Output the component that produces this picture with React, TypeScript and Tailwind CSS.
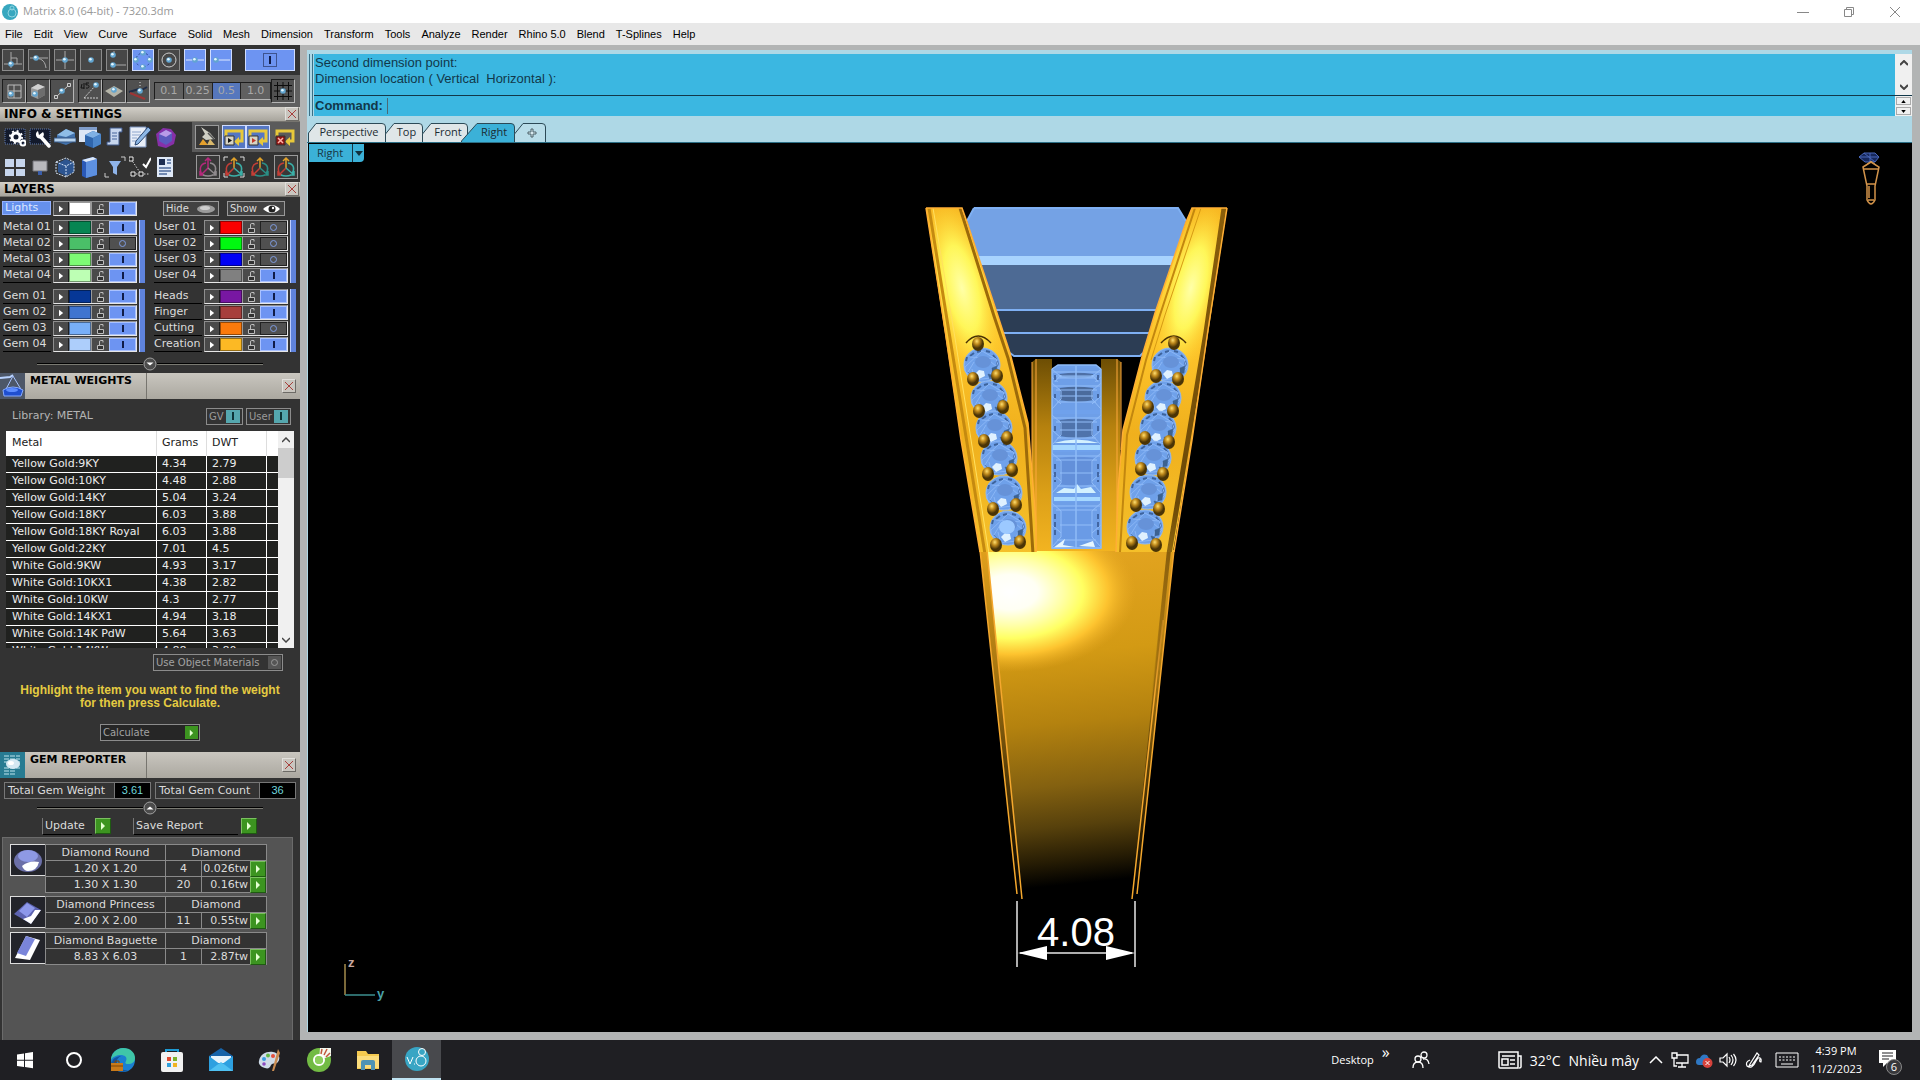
import type { ReactNode } from "react";

const menuItems = [
  "File", "Edit", "View", "Curve", "Surface", "Solid", "Mesh", "Dimension", "Transform",
  "Tools", "Analyze", "Render", "Rhino 5.0", "Blend", "T-Splines", "Help",
];

type Layer = { name: string; color: string; on: boolean };

const layerGroups: { left: Layer[]; right: Layer[] }[] = [
  {
    left: [
      { name: "Metal 01", color: "bg-[#078552]", on: true },
      { name: "Metal 02", color: "bg-[#4abf68]", on: false },
      { name: "Metal 03", color: "bg-[#7dfa74]", on: true },
      { name: "Metal 04", color: "bg-[#bdffb4]", on: true },
    ],
    right: [
      { name: "User 01", color: "bg-[#fa0000]", on: false },
      { name: "User 02", color: "bg-[#00f910]", on: false },
      { name: "User 03", color: "bg-[#0000f4]", on: false },
      { name: "User 04", color: "bg-[#808080]", on: true },
    ],
  },
  {
    left: [
      { name: "Gem 01", color: "bg-[#063796]", on: true },
      { name: "Gem 02", color: "bg-[#3f74cf]", on: true },
      { name: "Gem 03", color: "bg-[#78aff8]", on: true },
      { name: "Gem 04", color: "bg-[#adcefb]", on: true },
    ],
    right: [
      { name: "Heads", color: "bg-[#7817a2]", on: true },
      { name: "Finger", color: "bg-[#a63e3c]", on: true },
      { name: "Cutting", color: "bg-[#fb7a0c]", on: false },
      { name: "Creation", color: "bg-[#fcb924]", on: true },
    ],
  },
];

const metals = [
  ["Yellow Gold:9KY", "4.34", "2.79"],
  ["Yellow Gold:10KY", "4.48", "2.88"],
  ["Yellow Gold:14KY", "5.04", "3.24"],
  ["Yellow Gold:18KY", "6.03", "3.88"],
  ["Yellow Gold:18KY Royal", "6.03", "3.88"],
  ["Yellow Gold:22KY", "7.01", "4.5"],
  ["White Gold:9KW", "4.93", "3.17"],
  ["White Gold:10KX1", "4.38", "2.82"],
  ["White Gold:10KW", "4.3", "2.77"],
  ["White Gold:14KX1", "4.94", "3.18"],
  ["White Gold:14K PdW", "5.64", "3.63"],
  ["White Gold:14KW", "4.88", "3.80"],
];

const gems = [
  { name: "Diamond Round", shape: "round", rows: [["1.20 X 1.20", "4", "0.026tw"], ["1.30 X 1.30", "20", "0.16tw"]] },
  { name: "Diamond Princess", shape: "princess", rows: [["2.00 X 2.00", "11", "0.55tw"]] },
  { name: "Diamond Baguette", shape: "baguette", rows: [["8.83 X 6.03", "1", "2.87tw"]] },
];

/* ---------- small shared pieces ---------- */

function CloseButton({ label }: { label: string }) {
  return (
    <button aria-label={label} className="flex size-[14px] items-center justify-center border border-[#e2e0dc] border-r-[#6d6b66] border-b-[#6d6b66] bg-[#c9c6bf]">
      <svg viewBox="0 0 10 10" className="size-[10px]"><path d="M1 1l8 8M9 1l-8 8" stroke="#a8403c" strokeWidth="1" /></svg>
    </button>
  );
}

function SectionBar({ title }: { title: string }) {
  return (
    <div className="flex h-[15px] items-center justify-between border-b border-[#77756f] bg-linear-to-b from-[#d2cfc8] to-[#a8a59d] pr-px pl-1">
      <h2 className="text-[12px] leading-[14px] font-bold text-black">{title}</h2>
      <CloseButton label={"Close " + title} />
    </div>
  );
}

function PanelBar({ title, icon }: { title: string; icon: ReactNode }) {
  return (
    <div className="flex h-[26px] items-stretch bg-linear-to-b from-[#c9c6bf] to-[#aba8a0]">
      <div className="w-[25px] overflow-hidden">{icon}</div>
      <h2 className="w-[122px] border-r border-[#77756f] pl-[5px] text-[11px] leading-4 font-bold text-black">{title}</h2>
      <div className="flex flex-1 items-center justify-end pr-1"><CloseButton label={"Close " + title} /></div>
    </div>
  );
}

function Splitter({ up }: { up?: boolean }) {
  return (
    <div className="mx-[37px] flex h-[14px] items-center">
      <span className="h-[2px] flex-1 border-t border-black bg-[#7a7a72]" />
      <button aria-label={up ? "Collapse" : "Expand"}>
        <svg viewBox="0 0 14 14" className="size-[14px]">
          <circle cx="7" cy="7" r="6" fill="#4c4c4c" stroke="#a0a0a0" />
          <path d={up ? "M3.5 8.5l3.5-3 3.5 3z" : "M3.5 5.5l3.5 3 3.5-3z"} fill="#fff" />
        </svg>
      </button>
      <span className="h-[2px] flex-1 border-t border-black bg-[#7a7a72]" />
    </div>
  );
}

function GreenArrow({ label }: { label: string }) {
  return (
    <button aria-label={label} className="flex size-4 shrink-0 items-center justify-center border border-[#7bc060] border-r-[#1f5a12] border-b-[#1f5a12] bg-[#3c9420]">
      <svg viewBox="0 0 6 8" className="h-2 w-[6px]"><path d="M1 0l4 4-4 4z" fill="#e4ffd2" /></svg>
    </button>
  );
}

/* ---------- snap toolbar ---------- */

const Ball = ({ x, y }: { x: number; y: number }) => (
  <>
    <circle cx={x} cy={y} r="2.8" fill="#62a5d0" />
    <circle cx={x - 0.6} cy={y - 0.8} r="1.3" fill="#e4f7ff" />
  </>
);

const snapTools: { name: string; on?: boolean; art: ReactNode }[] = [
  { name: "End", art: <><path d="M1 14h18M8 2v16M8 8h6v6" stroke="#aaa" fill="none" /><Ball x={8} y={14} /></> },
  { name: "Near", art: <><path d="M1 8h18M7 8c7 1 9 4 10 10" stroke="#aaa" fill="none" /><Ball x={7} y={8} /></> },
  { name: "Int", art: <><path d="M1 10h18M10 1v18" stroke="#aaa" /><Ball x={10} y={10} /></> },
  { name: "Point", art: <Ball x={10} y={10} /> },
  { name: "Mid", art: <><path d="M8 15h11M7 1v6" stroke="#aaa" /><Ball x={6} y={5} /><Ball x={6} y={15} /></> },
  { name: "Quad", on: true, art: <><circle cx="10" cy="10" r="7" stroke="#2b4a91" fill="none" strokeDasharray="2 2" /><Ball x={10} y={3} /><Ball x={17} y={10} /><Ball x={10} y={17} /><Ball x={3} y={10} /></> },
  { name: "Cen", art: <><circle cx="10" cy="10" r="7" stroke="#ccc" fill="none" /><Ball x={10} y={10} /></> },
  { name: "Midpoint", on: true, art: <><path d="M1 10h18" stroke="#dde8ff" /><Ball x={10} y={10} /></> },
  { name: "Endpoint", on: true, art: <><path d="M5 10h14" stroke="#dde8ff" /><Ball x={5} y={10} /></> },
];

const planeTools: { name: string; art: ReactNode }[] = [
  { name: "Plane", art: <><path d="M4 4h13v13H4zM10 4v13M4 10h13" stroke="#bbb" fill="none" /><Ball x={7} y={13} /></> },
  { name: "Solid", art: <><path d="M3 7l7-4 7 3v8l-7 4-7-3z" fill="#9a9a9a" /><path d="M3 7l7 2 7-3-7-3z" fill="#d0d0d0" /><path d="M10 9v9l7-4V6z" fill="#6d6d6d" /><Ball x={7} y={13} /></> },
  { name: "Line", art: <><path d="M4 16L17 4" stroke="#ccc" /><path d="M2.500 14.500h3v3h-3zM15.500 2.500h3v3h-3z" fill="#555" stroke="#ccc" /><Ball x={10} y={10} /></> },
];

const angleTools: { name: string; art: ReactNode }[] = [
  { name: "Angle 45", art: <><path d="M4 17h14M4 17L16 4" stroke="#ccc" strokeDasharray="2 1" /><path d="M2 3l-1 4h3M4 2v6M9 2H6v2c4-1 4 4 0 3" stroke="#111" fill="none" /><Ball x={16} y={4} /></> },
  { name: "Project", art: <><path d="M1 10l9-5 9 5-9 6z" fill="#b4b4a8" /><Ball x={10} y={9} /></> },
  { name: "Smart Track", art: <><path d="M12 1v10" stroke="#ddd" strokeDasharray="1 2" /><path d="M1 11l10-3M12 10l7-4" stroke="#1f2b45" strokeWidth="2" /><path d="M2 12l15 6" stroke="#9d3535" strokeWidth="2" /><Ball x={12} y={10} /></> },
];

const squareTool = "flex size-[24px] items-center justify-center border border-[#1d1d1d] border-r-[#b5b5b5] border-b-[#b5b5b5] bg-[#505050]";

function SnapToolbars() {
  return (
    <>
      <div className="flex h-[30px] items-center gap-1 pl-[2px]">
        {snapTools.map((tool) => (
          <button
            key={tool.name}
            aria-label={tool.name}
            className={
              tool.on
                ? "flex size-[22px] items-center justify-center border border-[#cfdcff] bg-[#6d94f2]"
                : "flex size-[22px] items-center justify-center border border-[#8b8b8b] bg-[#474747]"
            }
          >
            <svg viewBox="0 0 20 20" className="size-5">{tool.art}</svg>
          </button>
        ))}
        <button aria-label="Snaps on" className="ml-[9px] flex h-[22px] w-[50px] items-center justify-center border border-[#cfdcff] bg-[#6d94f2]">
          <span className="flex size-[14px] items-center justify-center border border-[#3d5390]"><span className="h-2 w-[2px] bg-[#101c48]" /></span>
        </button>
      </div>
      <div className="flex h-[32px] items-center bg-[#606060] pl-[2px]">
        {planeTools.map((tool) => (
          <button key={tool.name} aria-label={tool.name} className={squareTool}><svg viewBox="0 0 20 20" className="size-5">{tool.art}</svg></button>
        ))}
        <span className="w-1" />
        {angleTools.map((tool) => (
          <button key={tool.name} aria-label={tool.name} className={squareTool}><svg viewBox="0 0 20 20" className="size-5">{tool.art}</svg></button>
        ))}
        <div className="ml-1 grid h-[18px] w-[117px] grid-cols-4 border border-[#1d1d1d] border-b-[#b5b5b5] text-[11px] leading-4 text-[#a8a8a8]">
          <button className="border-r border-[#222]">0.1</button>
          <button className="border-r border-[#222]">0.25</button>
          <button className="border-r border-[#222] bg-[#5677bd]">0.5</button>
          <button>1.0</button>
        </div>
        <button aria-label="Grid snap" className={squareTool}>
          <svg viewBox="0 0 20 20" className="size-5"><path d="M1 4.500h18M1 10h18M1 15.500h18M4.500 1v18M10 1v18M15.500 1v18" stroke="#0c0c0c" /><Ball x={10} y={10} /></svg>
        </button>
      </div>
    </>
  );
}

/* ---------- info & settings ---------- */

const infoTop: { name: string; art: ReactNode }[] = [
  { name: "Settings", art: <><path d="M1 3h20v15H1z" fill="#131a2c" stroke="#5f79ad" strokeDasharray="1 1" /><circle cx="12" cy="11" r="4" fill="none" stroke="#fff" strokeWidth="3" /><circle cx="12" cy="11" r="6" fill="none" stroke="#fff" strokeWidth="2" strokeDasharray="2 2.700" /><circle cx="19" cy="17" r="2.500" fill="none" stroke="#fff" strokeWidth="2" /></> },
  { name: "Options", art: <><path d="M1 3h20v15H1z" fill="#131a2c" stroke="#5f79ad" strokeDasharray="1 1" /><path d="M12 11l8 9" stroke="#fff" strokeWidth="3.500" strokeLinecap="round" /><path d="M14 6a4 4 0 1 1-5-1l1 4z" fill="#fff" /></> },
  { name: "Dimensions", art: <><path d="M3 9l9-6 9 4v8l-9 4-9-3z" fill="#4272ac" /><path d="M3 9l9-6 9 4-9 4z" fill="#8fbde6" /><path d="M0 12h22v4H0z" fill="#b7d3ee" stroke="#355784" /></> },
  { name: "Object notes", art: <><path d="M0 1h18v15H0z" fill="#dce6f5" /><path d="M0 1h18v3H0z" fill="#7f9cc8" /><path d="M6 9l8-4 8 3v10l-8 4-8-3z" fill="#2f66ad" /><path d="M6 9l8-4 8 3-8 4z" fill="#7fb1e5" /><path d="M14 12v10l8-4V8z" fill="#4b86cb" /></> },
  { name: "Script", art: <><path d="M6 2h12v4h-3v13H3v-3h3z" fill="#c7d6ee" stroke="#3c5688" /><path d="M8 7h5M8 10h5M8 13h5" stroke="#47649b" /></> },
  { name: "Notes", art: <><path d="M1 1h16v20H1z" fill="#e8eef8" stroke="#7a93be" /><path d="M3 6h9M3 9h9M3 12h5M3 15h5" stroke="#8ea6cd" /><path d="M22 4L9 18l-3 1 1-4L19 1z" fill="#8db7e6" stroke="#29456f" /></> },
  { name: "Object info", art: <><path d="M2 8l7-6 8 1 5 6-2 9-8 4-8-2z" fill="#8730a8" /><path d="M5 8l7-4 6 3v8l-6 4-7-4z" fill="#5b59bd" /><path d="M5 8l7-4 6 3-6 4z" fill="#b99be8" /></> },
];

const infoBottom: { name: string; art: ReactNode }[] = [
  { name: "Viewports", art: <><path d="M1 3h9v8H1zM12 3h9v8h-9zM1 13h9v7H1zM12 13h9v7h-9z" fill="#c6d5ec" /></> },
  { name: "Display", art: <><path d="M4 5h14v10H4z" fill="#b9b9bd" stroke="#77777c" /><path d="M9 15h4v4H9z" fill="#3a5da8" /></> },
  { name: "Bounding box", art: <><path d="M4 7l8-4 8 4v9l-8 4-8-4z" fill="#2d5590" /><path d="M2 6l10-4 8 4v10l-8 5-10-4zM2 6l10 4 8-4M12 10v11" stroke="#d6e6fa" fill="none" strokeDasharray="2 1" /></> },
  { name: "Library", art: <><path d="M3 4l11-3 4 2v16l-11 3-4-2z" fill="#2a59b8" /><path d="M7 6l11-3v16l-11 3z" fill="#5d90e0" /><path d="M3 4l11-3 4 2-11 3z" fill="#dce9fb" /></> },
  { name: "Filter", art: <><path d="M1 17v4h4M17 1h4v4" stroke="#ccc" fill="none" /><path d="M5 5h12l-4 6v8l-4-2v-6z" fill="#8fb4ea" /></> },
  { name: "Select points", art: <><path d="M2 3L12 18h8M4 18h7" stroke="#ddd" strokeDasharray="1.500 1.500" fill="none" /><path d="M0 1h4v4H0zM2 16h4v4H2zM10 16h4v4h-4z" fill="#222" stroke="#eee" /><path d="M14 8l3 3 5-9" stroke="#fff" strokeWidth="2" fill="none" /></> },
  { name: "Report", art: <><path d="M3 1h16v20H3z" fill="#dfe9f7" /><path d="M5 3h6v6H5z" fill="#1c2d50" /><path d="M13 4h4M13 7h4M5 12h12M5 15h12M5 18h8" stroke="#4e6a9b" strokeWidth="1.500" /></> },
];

const LoopArrow = ({ dot, cross }: { dot: string; cross?: boolean }) => (
  <svg viewBox="0 0 22 22" className="size-[22px]">
    <path d="M3 11V5h16v10h-4" fill="none" stroke="#e8c83a" strokeWidth="3" />
    <path d="M16 11v9l-5-4.500z" fill="#e8c83a" />
    <path d="M2 10h9v9H2z" fill={cross ? "#8e1512" : "#d8d4c4"} stroke="#333" />
    {cross ? <path d="M4 12l5 5m0-5l-5 5" stroke={dot} strokeWidth="1.500" /> : <path d="M5 12l4 2.500-4 2.500z" fill={dot} />}
  </svg>
);

const Gumball = ({ top, side, bottom, frame }: { top: string; side: string; bottom: string; frame?: boolean }) => (
  <svg viewBox="0 0 22 22" className="size-[22px]">
    <path d="M11 12V2M8 5l3-3 3 3" fill="none" stroke={top} strokeWidth="1.500" />
    <path d="M9 7C3 8 2 13 5 19M11 12l-7 7M3 15v4h4" fill="none" stroke={side} strokeWidth="1.500" />
    <path d="M13 7c6 1 7 6 4 11M11 12l8 7M19 15v4h-4M6 19q5 2 10 0" fill="none" stroke={bottom} strokeWidth="1.500" />
    {frame && <path d="M1 5V1h4M17 1h4v4M21 17v4h-4M5 21H1v-4" fill="none" stroke="#ddd" />}
  </svg>
);

const darkTile = "flex size-[24px] items-center justify-center border border-[#9a9a9a] bg-[#383838]";
const blueTile = "flex size-[24px] items-center justify-center border border-[#cfdcff] bg-[#5577c4]";
const plainTile = "flex size-[24px] items-center justify-center";

function InfoSettings() {
  return (
    <div className="flex h-[60px] justify-between">
      <div className="flex flex-col justify-around pl-1">
        <div className="flex gap-[3px]">
          {infoTop.map((t) => <button key={t.name} aria-label={t.name}><svg viewBox="0 0 22 22" className="size-[22px]">{t.art}</svg></button>)}
        </div>
        <div className="flex gap-[3px]">
          {infoBottom.map((t) => <button key={t.name} aria-label={t.name}><svg viewBox="0 0 22 22" className="size-[22px]">{t.art}</svg></button>)}
        </div>
      </div>
      <div className="flex w-[108px] flex-col">
        <div className="flex h-[30px] items-center gap-[3px] bg-[#5b5b5b] pl-[3px]">
          <button aria-label="Build history" className={darkTile}>
            <svg viewBox="0 0 22 22" className="size-[22px]"><path d="M5 1l4 7-3 3 4 3 9-1-5-6z" fill="#cfcfc4" /><path d="M12 7l6 6" stroke="#555" strokeWidth="1.500" /><path d="M3 19l4-6 5 6z" fill="#e5a02c" /><path d="M11 19l3-6 5 6z" fill="#d9b86a" /></svg>
          </button>
          <div className="flex">
            <button aria-label="History play" className={blueTile}><LoopArrow dot="#111" /></button>
            <button aria-label="History record" className={blueTile}><LoopArrow dot="#c0392b" /></button>
          </div>
          <button aria-label="History delete" className={plainTile}><LoopArrow dot="#ffb3a8" cross /></button>
        </div>
        <div className="flex h-[30px] items-center gap-[2px] pl-1">
          <button aria-label="Gumball" className={darkTile}><Gumball top="#b5287b" side="#b5287b" bottom="#8f8a8d" /></button>
          <button aria-label="Gumball frame" className={plainTile}><Gumball top="#e0a12a" side="#c43e36" bottom="#3bb0a8" frame /></button>
          <button aria-label="Gumball move" className={plainTile}><Gumball top="#e0a12a" side="#c43e36" bottom="#2b8f86" /></button>
          <button aria-label="Gumball align" className={darkTile}><Gumball top="#e0a12a" side="#c43e36" bottom="#3bb0a8" /></button>
        </div>
      </div>
    </div>
  );
}

/* ---------- layers ---------- */

const LockIcon = () => (
  <svg viewBox="0 0 10 10" className="size-[10px]"><path d="M1.500 5.500h6v4h-6z" fill="#333" stroke="#bdbdbd" /><path d="M3.500 5V2q0-1.500 1-1.500H7v2" fill="none" stroke="#bdbdbd" /></svg>
);

function LayerControls({ layer }: { layer: Layer }) {
  return (
    <div className="flex h-[15px] w-[84px] border border-[#8e8e8e] border-r-[#e6e6e6] border-b-[#e6e6e6] bg-[#4a4a4a]">
      <button aria-label={layer.name + " options"} className="flex w-[15px] items-center justify-center border-r border-[#1e1e1e]">
        <svg viewBox="0 0 6 8" className="h-2 w-[5px]"><path d="M0 0l5 4-5 4z" fill="#fff" /></svg>
      </button>
      <button aria-label={layer.name + " color"} className={"w-[22px] border border-black/40 " + layer.color} />
      <button aria-label={"Lock " + layer.name} className="flex w-[18px] items-center justify-center border-l border-[#999]"><LockIcon /></button>
      <button
        aria-label={"Show " + layer.name}
        aria-pressed={layer.on}
        className={
          layer.on
            ? "flex flex-1 items-center justify-center border border-[#a9c1ff] bg-[#6d94f2]"
            : "flex flex-1 items-center justify-center border border-[#222] bg-[#505050]"
        }
      >
        {layer.on ? <span className="h-[7px] w-[2px] bg-[#101c48]" /> : <span className="size-[7px] rounded-full border border-[#7f9ce0]" />}
      </button>
    </div>
  );
}

function LayerColumn({ layers }: { layers: Layer[] }) {
  return (
    <div className="flex gap-[2px]">
      <div className="flex flex-col gap-px">
        {layers.map((layer) => (
          <div key={layer.name} className="flex h-[15px]">
            <span className="mr-[2px] w-[48px] border-b border-black text-[11px] leading-[13px] whitespace-nowrap text-[#dcdcdc]">{layer.name}</span>
            <LayerControls layer={layer} />
          </div>
        ))}
      </div>
      <button aria-label="Toggle group" className="w-[6px] border-l border-[#bccdff] bg-[#5f83dc]" />
    </div>
  );
}

function Layers() {
  return (
    <div className="flex h-[176px] flex-col pt-1">
      <div className="flex h-[15px] items-start pl-[2px]">
        <span className="mr-[2px] h-[14px] w-[49px] border border-[#93b1ff] bg-[#6590ec] pl-[2px] text-[11px] leading-[11px] text-[#dbe6ff]">Lights</span>
        <LayerControls layer={{ name: "Lights", color: "bg-white", on: true }} />
        <button className="ml-[26px] flex h-[15px] w-[56px] items-center justify-between border border-[#999] bg-[#424242] px-[2px] text-[10px] leading-[12px] text-[#dcdcdc]">
          Hide
          <svg viewBox="0 0 20 10" className="h-[10px] w-5"><ellipse cx="10" cy="5" rx="9" ry="4" fill="#9b9b9b" /><ellipse cx="9" cy="4" rx="5" ry="2" fill="#cfcfcf" /></svg>
        </button>
        <button className="ml-2 flex h-[15px] w-[58px] items-center justify-between border border-[#999] bg-[#424242] px-[2px] text-[10px] leading-[12px] text-[#dcdcdc]">
          Show
          <svg viewBox="0 0 20 10" className="h-[10px] w-5"><path d="M1 5q9-8 17 0-8 8-17 0z" fill="#fff" /><circle cx="10" cy="5" r="3.500" fill="#222" /><circle cx="11" cy="4" r="1.200" fill="#fff" /></svg>
        </button>
      </div>
      <div className="mt-1 flex flex-col gap-[6px] pl-[3px]">
        {layerGroups.map((group, i) => (
          <div key={i} className="flex gap-[9px]">
            <LayerColumn layers={group.left} />
            <LayerColumn layers={group.right} />
          </div>
        ))}
      </div>
      <div className="mt-[5px]"><Splitter /></div>
    </div>
  );
}

/* ---------- metal weights ---------- */

function MetalWeights() {
  return (
    <section>
      <PanelBar
        title="METAL WEIGHTS"
        icon={
          <svg viewBox="0 0 25 26" className="h-[26px] w-[25px]">
            <path d="M0 0h25v26H0z" fill="#4d5768" />
            <path d="M0 5l10-1 3-2" stroke="#b9d3ff" strokeWidth="2" fill="none" />
            <path d="M13 3L5 18M13 3l9 15" stroke="#a7c3ff" fill="none" />
            <path d="M3 17q10-6 20 0l-2 6H4z" fill="#1f4fd0" stroke="#86aaff" />
            <ellipse cx="12" cy="17" rx="6" ry="2" fill="#5d8dff" />
          </svg>
        }
      />
      <div className="flex h-[32px] items-center justify-between pt-[2px] pr-[9px] pl-3 text-[11px] text-[#b4b4b4]">
        <span>Library: METAL</span>
        <div className="flex gap-[3px] text-[10px]">
          <button className="flex h-[17px] w-[37px] items-center justify-between border border-[#8c8c8c] px-[2px] text-[#9a9a9a]">
            GV<span className="flex h-[13px] w-[14px] items-center justify-center bg-[#55a7ae]"><span className="h-2 w-[2px] bg-[#0d3336]" /></span>
          </button>
          <button className="flex h-[17px] w-[45px] items-center justify-between border border-[#8c8c8c] px-[2px] text-[#9a9a9a]">
            User<span className="flex h-[13px] w-[14px] items-center justify-center bg-[#55a7ae]"><span className="h-2 w-[2px] bg-[#0d3336]" /></span>
          </button>
        </div>
      </div>
      <div className="mr-[6px] ml-[6px] flex h-[217px] overflow-hidden">
        <div className="flex-1 overflow-hidden">
          <table className="w-full table-fixed border-separate border-spacing-0 text-left text-[11px]">
            <colgroup>
              <col className="w-[151px]" />
              <col className="w-[50px]" />
              <col className="w-[60px]" />
              <col />
            </colgroup>
            <thead>
              <tr className="h-[25px] bg-white text-[#222]">
                <th className="border-r border-[#ddd] pl-[6px] font-normal">Metal</th>
                <th className="border-r border-[#ddd] pl-[5px] font-normal">Grams</th>
                <th className="border-r border-[#ddd] pl-[5px] font-normal">DWT</th>
                <th aria-label="Blank" />
              </tr>
            </thead>
            <tbody>
              {metals.map((row) => (
                <tr key={row[0]} className="h-[17px] bg-[#20211f] leading-4 whitespace-nowrap text-[#ececec]">
                  <td className="border-r border-b border-white pl-[6px]">{row[0]}</td>
                  <td className="border-r border-b border-white pl-[5px]">{row[1]}</td>
                  <td className="border-r border-b border-white pl-[5px]">{row[2]}</td>
                  <td className="border-b border-white" />
                </tr>
              ))}
            </tbody>
          </table>
        </div>
        <div className="flex w-4 flex-col bg-[#f0f0f0]">
          <button aria-label="Scroll up" className="flex h-[17px] items-center justify-center"><svg viewBox="0 0 8 6" className="h-[6px] w-2"><path d="M0 5l4-4 4 4" stroke="#444" strokeWidth="1.500" fill="none" /></svg></button>
          <div className="h-[30px] bg-[#cdcdcd]" />
          <span className="flex-1" />
          <button aria-label="Scroll down" className="flex h-[17px] items-center justify-center"><svg viewBox="0 0 8 6" className="h-[6px] w-2"><path d="M0 1l4 4 4-4" stroke="#444" strokeWidth="1.500" fill="none" /></svg></button>
        </div>
      </div>
      <div className="flex h-[104px] flex-col items-center pt-[6px]">
        <button className="mr-[17px] flex h-[17px] w-[130px] items-center justify-between self-end border border-[#8c8c8c] pr-px pl-[2px] text-[10px] text-[#a2a2a2]">
          Use Object Materials
          <span className="flex size-[13px] items-center justify-center bg-[#555]"><span className="size-[7px] rounded-full border border-[#999]" /></span>
        </button>
        <p className="mt-[13px] text-center font-['Liberation_Sans',Arial,sans-serif] text-[12px] leading-[13px] font-bold text-[#e5cb41]">
          Highlight the item you want to find the weight<br />for then press Calculate.
        </p>
        <button className="mt-[14px] flex h-[17px] w-[100px] items-center justify-between border border-[#8c8c8c] bg-[#262626] pr-px pl-[2px] text-[10px] text-[#a2a2a2]">
          Calculate
          <span className="flex size-[13px] items-center justify-center bg-[#3c9420]"><svg viewBox="0 0 6 8" className="h-2 w-[5px]"><path d="M1 0l4 4-4 4z" fill="#e4ffd2" /></svg></span>
        </button>
      </div>
    </section>
  );
}

/* ---------- gem reporter ---------- */

function GemPicture({ shape }: { shape: string }) {
  return (
    <svg viewBox="0 0 34 30" className="h-[30px] w-[34px]">
      <path d="M0 0h34v30H0z" fill="#23242a" />
      {shape === "round" && <><ellipse cx="17" cy="16" rx="14" ry="11" fill="#6b6fa8" /><ellipse cx="17" cy="11" rx="10" ry="6" fill="#8e99e4" /><path d="M11 21q7-6 17-4-2 9-11 9-4 0-6-5z" fill="#fff" /></>}
      {shape === "princess" && <><path d="M3 17L16 5l14 8-10 14z" fill="#5d63b0" /><path d="M8 14l8-8 8 5-8 9z" fill="#8d98ea" /><path d="M30 13L20 27l-8-5 8-3 4-6z" fill="#fff" /></>}
      {shape === "baguette" && <><path d="M15 3l14 4-10 20-15-2z" fill="#fff" /><path d="M15 3l9 3-9 17-9-3z" fill="#7a85da" /></>}
    </svg>
  );
}

function GemReporter() {
  return (
    <section className="flex flex-1 flex-col">
      <PanelBar
        title="GEM REPORTER"
        icon={
          <svg viewBox="0 0 25 26" className="h-[26px] w-[25px]">
            <path d="M0 0h25v26H0z" fill="#277b92" />
            <path d="M4 4h16M4 7h16M4 10h16M4 16h16M4 19h12M4 22h12" stroke="#bfe6ee" strokeDasharray="5 1" />
            <ellipse cx="13" cy="12" rx="7" ry="5" fill="#d4e8f2" /><ellipse cx="11" cy="11" rx="3" ry="2" fill="#fff" />
          </svg>
        }
      />
      <div className="mx-1 mt-1 flex gap-1 text-[11px] leading-[15px] text-[#dcdcdc]">
        <div className="flex h-[17px] w-[147px] border border-[#777]">
          <span className="flex-1 border-r border-[#777] pl-[3px] whitespace-nowrap">Total Gem Weight</span>
          <output className="w-[35px] bg-black text-center font-['Liberation_Sans',Arial,sans-serif] text-[#6fd6dc]">3.61</output>
        </div>
        <div className="flex h-[17px] w-[141px] border border-[#777]">
          <span className="flex-1 border-r border-[#777] pl-[3px] whitespace-nowrap">Total Gem Count</span>
          <output className="w-[35px] bg-black text-center font-['Liberation_Sans',Arial,sans-serif] text-[#6fd6dc]">36</output>
        </div>
      </div>
      <div className="mt-[2px]"><Splitter up /></div>
      <div className="mt-[3px] flex h-[17px] text-[11px] leading-4 text-[#dcdcdc]">
        <span className="ml-[42px] w-[50px] border-b border-l border-[#777] border-b-black pl-[2px]">Update</span>
        <span className="w-[3px]" />
        <GreenArrow label="Update" />
        <span className="ml-[22px] w-[105px] border-b border-l border-[#777] border-b-black pl-[2px]">Save Report</span>
        <span className="w-[3px]" />
        <GreenArrow label="Save Report" />
      </div>
      <div className="mt-[2px] mr-[7px] ml-[2px] flex flex-1 flex-col gap-[3px] border border-b-0 border-[#6b6b6b] bg-[#545454] pt-[6px] pl-[7px]">
        {gems.map((gem) => (
          <div key={gem.name} className="flex items-start">
            <div className="border border-[#ddd]"><GemPicture shape={gem.shape} /></div>
            <table className="-ml-px w-[222px] table-fixed border-collapse bg-[#333] text-center text-[11px] leading-[15px] text-[#dcdcdc]">
              <colgroup>
                <col className="w-[120px]" />
                <col className="w-[36px]" />
                <col />
              </colgroup>
              <thead>
                <tr className="h-4 whitespace-nowrap">
                  <th className="border border-[#8a8a8a] font-normal">{gem.name}</th>
                  <th colSpan={2} className="border border-[#8a8a8a] font-normal">Diamond</th>
                </tr>
              </thead>
              <tbody>
                {gem.rows.map((row) => (
                  <tr key={row[0]} className="h-4">
                    <td className="border border-[#8a8a8a]">{row[0]}</td>
                    <td className="border border-[#8a8a8a]">{row[1]}</td>
                    <td className="border border-[#8a8a8a] p-0">
                      <div className="flex h-[15px] items-center"><span className="flex-1 text-right">{row[2]}</span><span className="ml-[2px] flex"><GreenArrow label={"Show " + row[0]} /></span></div>
                    </td>
                  </tr>
                ))}
              </tbody>
            </table>
          </div>
        ))}
      </div>
    </section>
  );
}

/* ---------- viewport ---------- */

const leftGems = [[982, 365], [989, 398], [994, 428], [999, 458], [1004, 493], [1008, 528]];
const rightGems = [[1170, 365], [1163, 398], [1158, 428], [1153, 458], [1148, 492], [1145, 527]];
const beads = [
  [978, 344], [973, 379], [997, 376], [979, 411], [1003, 407], [984, 441], [1007, 438], [988, 474], [1012, 470],
  [993, 509], [1016, 505], [996, 545], [1020, 542], [1174, 343], [1156, 376], [1178, 379], [1148, 407], [1173, 411],
  [1145, 438], [1169, 442], [1141, 469], [1163, 474], [1136, 505], [1159, 509], [1132, 543], [1156, 545],
];

function RoundGem({ x, y }: { x: number; y: number }) {
  return (
    <g transform={`translate(${x} ${y})`}>
      <ellipse rx="18" ry="17" fill="#6fa1ea" stroke="#8fb9f5" />
      <path d="M-12-9l4-3M-5-13l4-1M4-14l4 1M11-10l3 4M15-4l1 5M-16-4l1-4" stroke="#3d639c" strokeWidth="2" />
      <path d="M-17 2L0-14l14 8 3 9-9 10-16 2-9-9zM-12-8L14-6M-8-3l-6 10M8-4l8 7M-8 12l-2-8M8 11l2-7" fill="none" stroke="#8ab6f6" />
      <ellipse cx="1" cy="-3" rx="8" ry="6" fill="#6692d8" />
      <path d="M10 3l5-2-1 7-4 1zM6 9l4 1-2 4zM-14 7l3 3" fill="#3c6291" stroke="#3c6291" strokeWidth="0.500" />
      <path d="M-7 9l4-4 5 1 1 5-6 3z" fill="#dff1ff" />
    </g>
  );
}

// Side view of one square stone with its table and corner facets
function SquareGem({ y, h, table }: { y: number; h: number; table: string }) {
  return (
    <g>
      <path d={`M1052 ${y}h49v${h}h-49z`} fill="#6e9fe8" />
      <path d={`M1060 ${y + 6}q16-3 33 0v${h - 16}q-16 4-33 0z`} fill={table} />
      <path d={`M1053 ${y + 4}h47M1056 ${y + 8}h41M1052 ${y + 1}l9 8v${h - 20}l-9 10M1101 ${y + 1}l-9 8v${h - 20}l9 10M1060 ${y + h / 2}h33M1057 ${y + h - 8}h39M1052 ${y + h / 2}l9 8M1101 ${y + h / 2}l-9 8`} fill="none" stroke="#93bef9" />
      <path d={`M1055 ${y + 12}v${h - 24}M1098 ${y + 12}v${h - 24}`} stroke="#34548a" strokeWidth="1.500" strokeDasharray="5 3" />
    </g>
  );
}

function Ring() {
  return (
    <svg viewBox="308 143 1604 889" preserveAspectRatio="xMidYMid meet" className="size-full" role="img" aria-label="Ring, right view">
      <defs>
        <linearGradient id="arm" x1="0" x2="0" y1="208" y2="556" gradientUnits="userSpaceOnUse">
          <stop offset="0" stopColor="#f7b520" /><stop offset="0.200" stopColor="#ffd034" /><stop offset="0.400" stopColor="#fdc42a" />
          <stop offset="0.650" stopColor="#f0b01d" /><stop offset="1" stopColor="#f5c02a" />
        </linearGradient>
        <radialGradient id="glow"><stop offset="0" stopColor="#ffffa8" /><stop offset="0.450" stopColor="#ffff60" stopOpacity="0.850" /><stop offset="1" stopColor="#ffd030" stopOpacity="0" /></radialGradient>
        <linearGradient id="body" x1="1060" x2="1095" y1="550" y2="892" gradientUnits="userSpaceOnUse">
          <stop offset="0" stopColor="#e3a420" /><stop offset="0.300" stopColor="#d39a14" /><stop offset="0.500" stopColor="#b4820f" />
          <stop offset="0.680" stopColor="#846110" /><stop offset="0.800" stopColor="#57410c" /><stop offset="0.900" stopColor="#261c04" /><stop offset="0.970" stopColor="#000" />
        </linearGradient>
        <linearGradient id="edge" x1="0" x2="0" y1="550" y2="895" gradientUnits="userSpaceOnUse">
          <stop offset="0" stopColor="#e0a01c" /><stop offset="0.350" stopColor="#a87610" /><stop offset="0.700" stopColor="#4a3406" /><stop offset="1" stopColor="#000" />
        </linearGradient>
        <radialGradient id="shine">
          <stop offset="0" stopColor="#fff" /><stop offset="0.220" stopColor="#fffff4" /><stop offset="0.420" stopColor="#ffffa8" /><stop offset="0.580" stopColor="#ffff62" />
          <stop offset="0.780" stopColor="#ffc530" stopOpacity="0.950" /><stop offset="1" stopColor="#e8a922" stopOpacity="0" />
        </radialGradient>
        <radialGradient id="bead" cx="0.400" cy="0.300"><stop offset="0" stopColor="#ffdf70" /><stop offset="0.450" stopColor="#c08a1c" /><stop offset="1" stopColor="#4a3406" /></radialGradient>
        <linearGradient id="post" x1="0" x2="0" y1="359" y2="552" gradientUnits="userSpaceOnUse">
          <stop offset="0" stopColor="#6d4e04" /><stop offset="0.350" stopColor="#b5810e" /><stop offset="0.700" stopColor="#dca018" /><stop offset="1" stopColor="#f3b421" />
        </linearGradient>
        <linearGradient id="groove" x1="0" x2="0" y1="208" y2="700" gradientUnits="userSpaceOnUse">
          <stop offset="0" stopColor="#8a5e0a" /><stop offset="0.600" stopColor="#6b4807" /><stop offset="1" stopColor="#6b4807" stopOpacity="0" />
        </linearGradient>
        <clipPath id="bodyClip"><path d="M981 551H1173L1132 898H1021z" /></clipPath>
        <clipPath id="armClipL"><path d="M926 208H962L967 222 997 313 1010 353 1028 423 1036 523V552H980L961 440z" /></clipPath>
        <clipPath id="armClipR"><path d="M1227 208H1192L1186 222 1155 313 1143 353 1123 430 1118 490 1116 552H1173L1192 440z" /></clipPath>
      </defs>

      {/* centre stone */}
      <path d="M974 208H1178L1186 221 1143 353 1140 356H1014L1010 353 967 221z" fill="#2c3d54" />
      <path d="M974 208H1178L1186 221 1175 256H978L967 221z" fill="#74a2e5" />
      <path d="M978 256H1175L1172 265H981z" fill="#a8d3fe" />
      <path d="M981 265H1172L1158 309H995z" fill="#4d6a94" />
      <path d="M974 208H1178L1186 221M967 221l7-13M995 310H1157M1003 333H1149M1010 353l4 3H1140l3-3" fill="none" stroke="#7fb0f3" strokeWidth="2" />

      {/* channel posts and the floor that joins them */}
      <path d="M1032 362l4-3h16v193h-20zM1101 359h16l4 3-2 190h-18zM1050 546h53v6h-53z" fill="url(#post)" />
      <path d="M1032 362V470M1036 359V548M1117 359V548M1121 362V450" stroke="#ffa93c" fill="none" />

      {/* square stones */}
      <path d="M1052 369l6-4h38l5 4v180h-49z" fill="#6fa1ec" />
      <SquareGem y={368} h={18} table="#4e70a6" />
      <SquareGem y={382} h={28} table="#4b6b9c" />
      <SquareGem y={414} h={32} table="#4f73ab" />
      <SquareGem y={452} h={42} table="#6390da" />
      <SquareGem y={502} h={46} table="#6a9be6" />
      <path d="M1052 445h49v5h-49zM1054 497h46v4h-46z" fill="#a6d8ff" />
      <path d="M1054 443q22-7 45 0zM1056 493l8-5 10 1 3-5 4 5 10-2 5 6z" fill="#d3f1ff" />
      <path d="M1053 548l12-9-2 6 12 2zM1079 546l14-5 2 6z" fill="#e6f6ff" />
      <path d="M1076 366v182M1052 369v179h49V369M1052 369l6-4h38l5 4" stroke="#8fbcf8" fill="none" strokeWidth="1.500" />

      {/* shank */}
      <g clipPath="url(#bodyClip)">
        <path d="M980 550h196v350H980z" fill="url(#body)" />
        <ellipse cx="1010" cy="592" rx="126" ry="80" fill="url(#shine)" />
      </g>
      <path d="M980 550L1017 894 1022 899 987 550zM1174 550L1137 894 1132 899 1167 550z" fill="url(#edge)" />
      <path d="M980 550L1017 894M987 550L1022 899M1174 550L1137 894M1163 620L1132 899" stroke="#f5a82e" strokeWidth="1.500" fill="none" />
      <path d="M1169 550L1153 700" stroke="url(#groove)" strokeWidth="4" fill="none" />

      {/* arms */}
      <g clipPath="url(#armClipL)">
        <path d="M920 205h120v352H920z" fill="url(#arm)" />
        <ellipse cx="962" cy="288" rx="34" ry="96" fill="url(#glow)" transform="rotate(-13 962 288)" />
        <path d="M960 208l34 108 14 42 17 70 8 126" fill="none" stroke="#9c6a0a" strokeWidth="3" />
        <path d="M929 208l20 124 36 222" fill="none" stroke="#c58a10" strokeWidth="3" />
        <path d="M933 208l22 130 34 216" fill="none" stroke="#ffe060" />
      </g>
      <g clipPath="url(#armClipR)">
        <path d="M1110 205h120v352h-120z" fill="url(#arm)" />
        <ellipse cx="1191" cy="288" rx="31" ry="92" fill="url(#glow)" transform="rotate(13 1191 288)" />
        <path d="M1224 208l-18 124-37 222" fill="none" stroke="url(#groove)" strokeWidth="5" />
        <path d="M1195 208l-35 107-14 45-19 75-7 117" fill="none" stroke="#c2870f" strokeWidth="2" />
        <path d="M1201 208l-36 107-14 45" fill="none" stroke="#d69a14" />
      </g>
      <path d="M926 208H962L967 222 997 313 1010 353 1028 423 1036 523V552M926 208L945 330 961 440 980 552" fill="none" stroke="#ffae35" strokeWidth="1.500" />
      <path d="M1227 208H1192L1186 222 1155 313 1143 353 1123 430 1118 490 1116 552M1227 208L1208 330 1192 440 1174 552" fill="none" stroke="#ffae35" strokeWidth="1.500" />
      <path d="M966 343q12-14 25 0M1161 343q13-14 25 0" fill="none" stroke="#4a3104" strokeWidth="1.500" />

      {[...leftGems, ...rightGems].map(([x, y]) => <RoundGem key={`${x}-${y}`} x={x} y={y} />)}
      <ellipse cx="1007" cy="527" rx="8" ry="7" fill="#9cc9ff" />
      {beads.map(([x, y]) => <ellipse key={`${x}-${y}`} cx={x} cy={y} rx="6" ry="7" fill="url(#bead)" />)}

      {/* dimension */}
      <path d="M1017 901v66M1135 901v66M1020 953H1132" stroke="#e8e8e8" strokeWidth="1.500" />
      <path d="M1018 953l29-7v14zM1135 953l-29-7v14z" fill="#fff" />
      <text x="1076" y="946" textAnchor="middle" fill="#fff" className="font-['Liberation_Sans',Arial,sans-serif] text-[40px]">4.08</text>
    </svg>
  );
}

function AxisIcon() {
  return (
    <svg viewBox="0 0 48 50" className="absolute bottom-[30px] left-8 h-[50px] w-12" aria-hidden="true">
      <path d="M5 12v31" stroke="#a58c4c" strokeWidth="1.500" />
      <path d="M5 43h30" stroke="#3d8f8f" strokeWidth="1.500" />
      <text x="8" y="15" fill="#c9a9a0" className="font-['Liberation_Sans',Arial,sans-serif] text-[13px] font-bold">z</text>
      <text x="37" y="46" fill="#4aa0a8" className="font-['Liberation_Sans',Arial,sans-serif] text-[13px] font-bold">y</text>
    </svg>
  );
}

function RingIcon() {
  return (
    <svg viewBox="0 0 24 54" className="absolute top-[9px] right-[31px] h-[54px] w-6" aria-hidden="true">
      <path d="M2 5l5-4h11l4 4-4 5H8zM2 5h20M13 1v9M7 1l11 9" fill="#16285c" stroke="#4866b8" />
      <path d="M8 14l6-5 6 5" stroke="#aaa" fill="none" />
      <path d="M6 15l8-5 8 5-4 19v14q-4 8-8 0V34zM7 17h14M9 32h10M11 48h6M12 34v12" fill="none" stroke="#d2934a" strokeWidth="1.500" />
    </svg>
  );
}

const viewTabs = [
  { name: "Perspective", width: 78, slant: 8, className: "relative h-[19px] w-[78px] pl-1", fill: "#dfe6e8" },
  { name: "Top", width: 38, slant: 9, className: "relative -ml-px h-[19px] w-[38px] pl-[5px]", fill: "#dfe6e8" },
  { name: "Front", width: 46, slant: 9, className: "relative -ml-px h-[19px] w-[46px] pl-[6px]", fill: "#dfe6e8" },
  { name: "Right", width: 54, slant: 16, className: "relative -ml-[7px] h-[19px] w-[54px] pl-3", fill: "#3bb1d8" },
];

function TabShape({ width, slant, fill }: { width: number; slant: number; fill: string }) {
  return (
    <svg width={width} height="19" className="absolute inset-0" aria-hidden="true">
      <path d={`M0.500 19V${slant + 2}L${slant} 0.500H${width - 4}q3.500 0 3.500 3.500V19`} fill={fill} stroke="#2c4a57" />
    </svg>
  );
}

function Workspace() {
  return (
    <main className="flex min-w-0 flex-1 flex-col border-t-[5px] border-r-[8px] border-b-[8px] border-l-[7px] border-[#b2b4b4] bg-[#aed8e6] font-['Open_Sans','Noto_Sans',sans-serif]">
      <div className="flex h-[66px] pt-1 pl-[2px]">
        <div className="mr-px h-[62px] w-1 border-x border-[#3a6f85]" />
        <div className="flex h-[62px] flex-1 flex-col bg-[#3bb7e1] font-['Liberation_Sans',Arial,sans-serif] text-[13px] leading-4 text-[#12384a]">
          <div className="h-[42px] border-b border-[#12384a] pt-px pl-px whitespace-pre">
            <p>Second dimension point:</p>
            <p>Dimension location ( Vertical  Horizontal ):</p>
          </div>
          <div className="flex h-5 items-center pl-px">
            <label htmlFor="command" className="font-bold">Command:</label>
            <input id="command" className="ml-1 h-4 flex-1 border-l border-[#4b6a76] bg-transparent outline-none" />
          </div>
        </div>
        <div className="flex h-[62px] w-[17px] flex-col bg-[#f0f0f0]">
          <button aria-label="History up" className="flex h-[18px] items-center justify-center"><svg viewBox="0 0 8 6" className="h-[6px] w-2"><path d="M0 5l4-4 4 4" stroke="#444" strokeWidth="2" fill="none" /></svg></button>
          <span className="flex-1" />
          <button aria-label="History down" className="flex h-[18px] items-center justify-center border-b border-[#12384a]"><svg viewBox="0 0 8 6" className="h-[6px] w-2"><path d="M0 1l4 4 4-4" stroke="#444" strokeWidth="2" fill="none" /></svg></button>
          <button aria-label="Previous command" className="m-px flex h-2 items-center justify-center border border-[#aaa]"><svg viewBox="0 0 6 4" className="h-[3px] w-[5px]"><path d="M0 4l3-4 3 4z" /></svg></button>
          <button aria-label="Next command" className="m-px flex h-2 items-center justify-center border border-[#aaa]"><svg viewBox="0 0 6 4" className="h-[3px] w-[5px]"><path d="M0 0l3 4 3-4z" /></svg></button>
        </div>
      </div>
      <nav className="mt-[7px] flex h-5 border-b border-[#2c6f86] pl-px text-[11px] text-[#1b2c33]" aria-label="Viewports">
        {viewTabs.map((tab) => (
          <button key={tab.name} className={tab.className}>
            <TabShape width={tab.width} slant={tab.slant} fill={tab.fill} />
            <span className="relative">{tab.name}</span>
          </button>
        ))}
        <button aria-label="New viewport" className="relative -ml-px flex h-[19px] w-8 items-center justify-center pl-1">
          <TabShape width={32} slant={9} fill="#b9dde9" />
          <svg viewBox="0 0 10 10" className="relative size-[10px]"><path d="M4 1h2v3h3v2H6v3H4V6H1V4h3z" fill="#d8eaf0" stroke="#4a6068" /></svg>
        </button>
      </nav>
      <div className="relative ml-px min-h-0 flex-1 bg-black">
        <Ring />
        <div className="absolute top-px left-px flex h-[18px] rounded-br-sm bg-[#3bb1d8] text-[11px] leading-[17px] text-[#173543]">
          <span className="w-[44px] border-r border-[#173543] pl-2">Right</span>
          <button aria-label="Viewport menu" className="flex w-[11px] items-center justify-center"><svg viewBox="0 0 8 5" className="h-[5px] w-2"><path d="M0 0h8L4 5z" fill="#12303d" /></svg></button>
        </div>
        <RingIcon />
        <AxisIcon />
      </div>
    </main>
  );
}

/* ---------- task bar ---------- */

const apps: { name: string; art: ReactNode }[] = [
  { name: "Start", art: <path d="M4 6.500l7-1v6.300H4zM12 5.300l8-1.200v7.700h-8zM4 12.700h7V19l-7-1zM12 12.700h8v7.600l-8-1.200z" fill="#fff" /> },
  { name: "Search", art: <circle cx="12" cy="12" r="7" fill="none" stroke="#fff" strokeWidth="2" /> },
  { name: "Edge", art: <><circle cx="12" cy="12" r="12" fill="#1b7fd0" /><path d="M0 12C0 5 6 0 12 0c8 0 12 5 12 10 0 4-3 6-7 6-3 0-3-1-2-3 2-4-2-6-5-6-4 0-9 2-10 5z" fill="#3fc6a8" /><path d="M6 12c-1 6 4 11 11 10-6 4-15 1-16-7 0-5 6-7 9-7-2 1-3 2-4 4z" fill="#12549f" /><path d="M0 15h12v8H0z" fill="#c87a1a" /><path d="M4 15v-2h4v2M0 18h12" stroke="#7c4507" fill="none" /></> },
  { name: "Microsoft Store", art: <><path d="M6 6V2h12v4" stroke="#1e9bd4" strokeWidth="2" fill="none" /><rect x="1" y="4" width="22" height="20" rx="2" fill="#f1f1f1" /><path d="M7 9h4v4H7z" fill="#e0492e" /><path d="M13 9h4v4h-4z" fill="#7bb42c" /><path d="M7 15h4v4H7z" fill="#2fa0dc" /><path d="M13 15h4v4h-4z" fill="#f1b41f" /></> },
  { name: "Mail", art: <><path d="M0 8L12 0l12 8v15H0z" fill="#1763a8" /><path d="M2 8h20v7H2z" fill="#e9f4fb" /><path d="M0 8l12 9 12-9v15H0z" fill="#2da0e0" /><path d="M0 23l12-9 12 9z" fill="#4fc1f2" /></> },
  { name: "Paint", art: <><path d="M1 13C2 6 9 3 15 4c6 1 8 6 5 10-2 3-5 0-7 3-1 3-3 4-6 3-4-1-7-4-6-7z" fill="#cfdbe8" /><circle cx="6" cy="11" r="2" fill="#3a9be0" /><circle cx="10" cy="7.500" r="2" fill="#62b848" /><circle cx="15" cy="8" r="2" fill="#e34e3c" /><circle cx="6" cy="16" r="1.800" fill="#8c4bc0" /><path d="M20 1l2 4-6 18h-2z" fill="#c98c52" /></> },
  { name: "Coc Coc", art: <><circle cx="12" cy="12" r="12" fill="#72bb44" /><path d="M12 12L13 0h11v8z" fill="#f4f9ef" /><path d="M14 6l1-5M17 7l3-6M19 9l4-4" stroke="#c2583c" strokeWidth="1.500" /><circle cx="12" cy="12" r="5" fill="none" stroke="#fff" strokeWidth="2" /><circle cx="12" cy="12" r="4" fill="#8ed05e" /></> },
  { name: "File Explorer", art: <><path d="M1 3h9l2 3h11v15H1z" fill="#f4c950" /><path d="M1 8h22v12H1z" fill="#fbdc7c" /><path d="M5 22v-8q0-2 2-2h10q2 0 2 2v8h-4v-5H9v5z" fill="#4d93b5" /></> },
];

function Taskbar() {
  return (
    <footer className="flex h-10 shrink-0 items-stretch bg-[#1f1f23] font-['Open_Sans','Noto_Sans',sans-serif] text-[11px] text-white">
      {apps.map((app) => (
        <button key={app.name} aria-label={app.name} className="flex w-[49px] items-center justify-center">
          <svg viewBox="0 0 24 24" className="size-6">{app.art}</svg>
        </button>
      ))}
      <button aria-label="Matrix" className="flex w-[49px] items-center justify-center border-b-2 border-[#bfe3f2] bg-[#48494d]">
        <svg viewBox="0 0 24 24" className="size-6"><circle cx="12" cy="12" r="12" fill="#38a5c4" /><path d="M2 10l3 7 3-7M9 17h1" stroke="#fff" fill="none" /><circle cx="16" cy="14" r="5" fill="none" stroke="#fff" /><circle cx="17" cy="5" r="3.500" fill="none" stroke="#fff" /></svg>
      </button>
      <div className="ml-auto flex items-center">
        <span>Desktop</span>
        <button className="mb-4 ml-2 text-[16px] leading-4">»</button>
        <button aria-label="People" className="ml-[22px]">
          <svg viewBox="0 0 18 18" className="size-[18px]" fill="none" stroke="#fff" strokeWidth="1.300"><circle cx="6" cy="8" r="3" /><path d="M1 17q0-6 5-6t5 6" /><circle cx="12" cy="4" r="3" /><path d="M11 8q5-1 6 5" /></svg>
        </button>
        <button className="ml-[68px] flex items-center text-[14px]">
          <svg viewBox="0 0 24 20" className="h-5 w-6" fill="none" stroke="#fff" strokeWidth="1.500"><path d="M1 2h19v16H2q-1 0-1-1zM20 6h3v11q0 1-2 1M4 6h13M4 9h6v6H4zM12 10h5M12 14h5" /></svg>
          <span className="ml-2">32°C</span><span className="ml-2">Nhiều mây</span>
        </button>
        <button aria-label="Hidden icons" className="ml-[10px]"><svg viewBox="0 0 14 8" className="h-2 w-[14px]"><path d="M1 7l6-6 6 6" fill="none" stroke="#fff" strokeWidth="1.500" /></svg></button>
        <button aria-label="Network" className="ml-2"><svg viewBox="0 0 18 18" className="size-[18px]" fill="none" stroke="#fff" strokeWidth="1.300"><path d="M5 4h12v8H5M11 12v4M7 16h8M1 2h5v5H1zM3 7v8h3" /></svg></button>
        <button aria-label="OneDrive" className="ml-[6px]"><svg viewBox="0 0 18 18" className="size-[18px]"><path d="M1 11q0-4 4-4 2-5 7-3l3 5-4 5H4q-3 0-3-3z" fill="#2f78c4" /><circle cx="12.500" cy="12" r="5" fill="#d6423c" /><path d="M10.500 10l4 4m0-4l-4 4" stroke="#fff" /></svg></button>
        <button aria-label="Volume" className="ml-[6px]"><svg viewBox="0 0 18 18" className="size-[18px]" fill="none" stroke="#fff" strokeWidth="1.200"><path d="M1 7h3l4-4v12l-4-4H1zM10 6q2 3 0 6M12 4q4 5 0 10M14.500 3q5 6 0 12" /></svg></button>
        <button aria-label="Windows Ink" className="ml-2"><svg viewBox="0 0 18 18" className="size-[18px]" fill="none" stroke="#fff" strokeWidth="1.200"><path d="M5 13L12 2l2 2-7 10-3 1zM5 9q-5 2-3 6 5 4 9-5l2-3q4-1 3 4-2 0-1-3" /></svg></button>
        <button aria-label="Keyboard" className="ml-3"><svg viewBox="0 0 24 16" className="h-4 w-6" fill="none" stroke="#fff"><path d="M1 1h22v14H1z" /><path d="M4 5h16M4 8h16" strokeDasharray="2 1.500" /><path d="M6 12h12" /></svg></button>
        <div className="ml-[10px] w-[54px] text-center leading-[18px]">4:39 PM<br />11/2/2023</div>
        <button aria-label="6 notifications" className="mr-[18px] ml-[15px] h-6 w-6">
          <svg viewBox="0 0 24 28" className="h-7 w-6"><path d="M1 2h17v13H9l-4 4v-4H1z" fill="#fff" /><path d="M4 5h11M4 8h11M4 11h7" stroke="#1f1f23" /><circle cx="16" cy="19" r="7.500" fill="#38383c" stroke="#888" /><text x="16" y="23" textAnchor="middle" fill="#fff" className="text-[11px]">6</text></svg>
        </button>
      </div>
    </footer>
  );
}

export default function App() {
  return (
    <div className="flex h-screen flex-col overflow-hidden bg-[#333]">
      <header className="shrink-0 bg-white">
        <div className="flex h-[23px] items-center pl-[2px] font-['Open_Sans','Noto_Sans',sans-serif] text-[11px] text-[#999]">
          <svg viewBox="0 0 16 16" className="size-4"><circle cx="8" cy="8" r="8" fill="#37a7bf" /><circle cx="10" cy="9" r="4" fill="none" stroke="#8fd3e0" /><circle cx="10" cy="4" r="2" fill="none" stroke="#8fd3e0" /></svg>
          <h1 className="ml-[5px]">Matrix 8.0 (64-bit) - 7320.3dm</h1>
          <div className="mr-[19px] ml-auto flex items-center gap-[34px]">
            <button aria-label="Minimize"><svg viewBox="0 0 12 12" className="size-3"><path d="M0 6.500h12" stroke="#888" /></svg></button>
            <button aria-label="Restore"><svg viewBox="0 0 12 12" className="size-3" fill="none" stroke="#888"><path d="M1.500 3.500h7v7h-7zM3.500 3.500v-2h7v7h-2" /></svg></button>
            <button aria-label="Close"><svg viewBox="0 0 12 12" className="size-3"><path d="M1 1l10 10M11 1L1 11" stroke="#888" /></svg></button>
          </div>
        </div>
        <nav className="flex h-[22px] items-center gap-[11px] bg-[#e8e8e8] pl-[5px] font-['Liberation_Sans',Arial,sans-serif] text-[11px] text-black">
          {menuItems.map((item) => <button key={item}>{item}</button>)}
        </nav>
      </header>
      <div className="flex min-h-0 flex-1">
        <aside className="flex w-[300px] shrink-0 flex-col overflow-hidden bg-[#333] font-['DejaVu_Sans',Verdana,sans-serif]">
          <SnapToolbars />
          <SectionBar title="INFO & SETTINGS" />
          <InfoSettings />
          <SectionBar title="LAYERS" />
          <Layers />
          <MetalWeights />
          <GemReporter />
        </aside>
        <Workspace />
      </div>
      <Taskbar />
    </div>
  );
}
